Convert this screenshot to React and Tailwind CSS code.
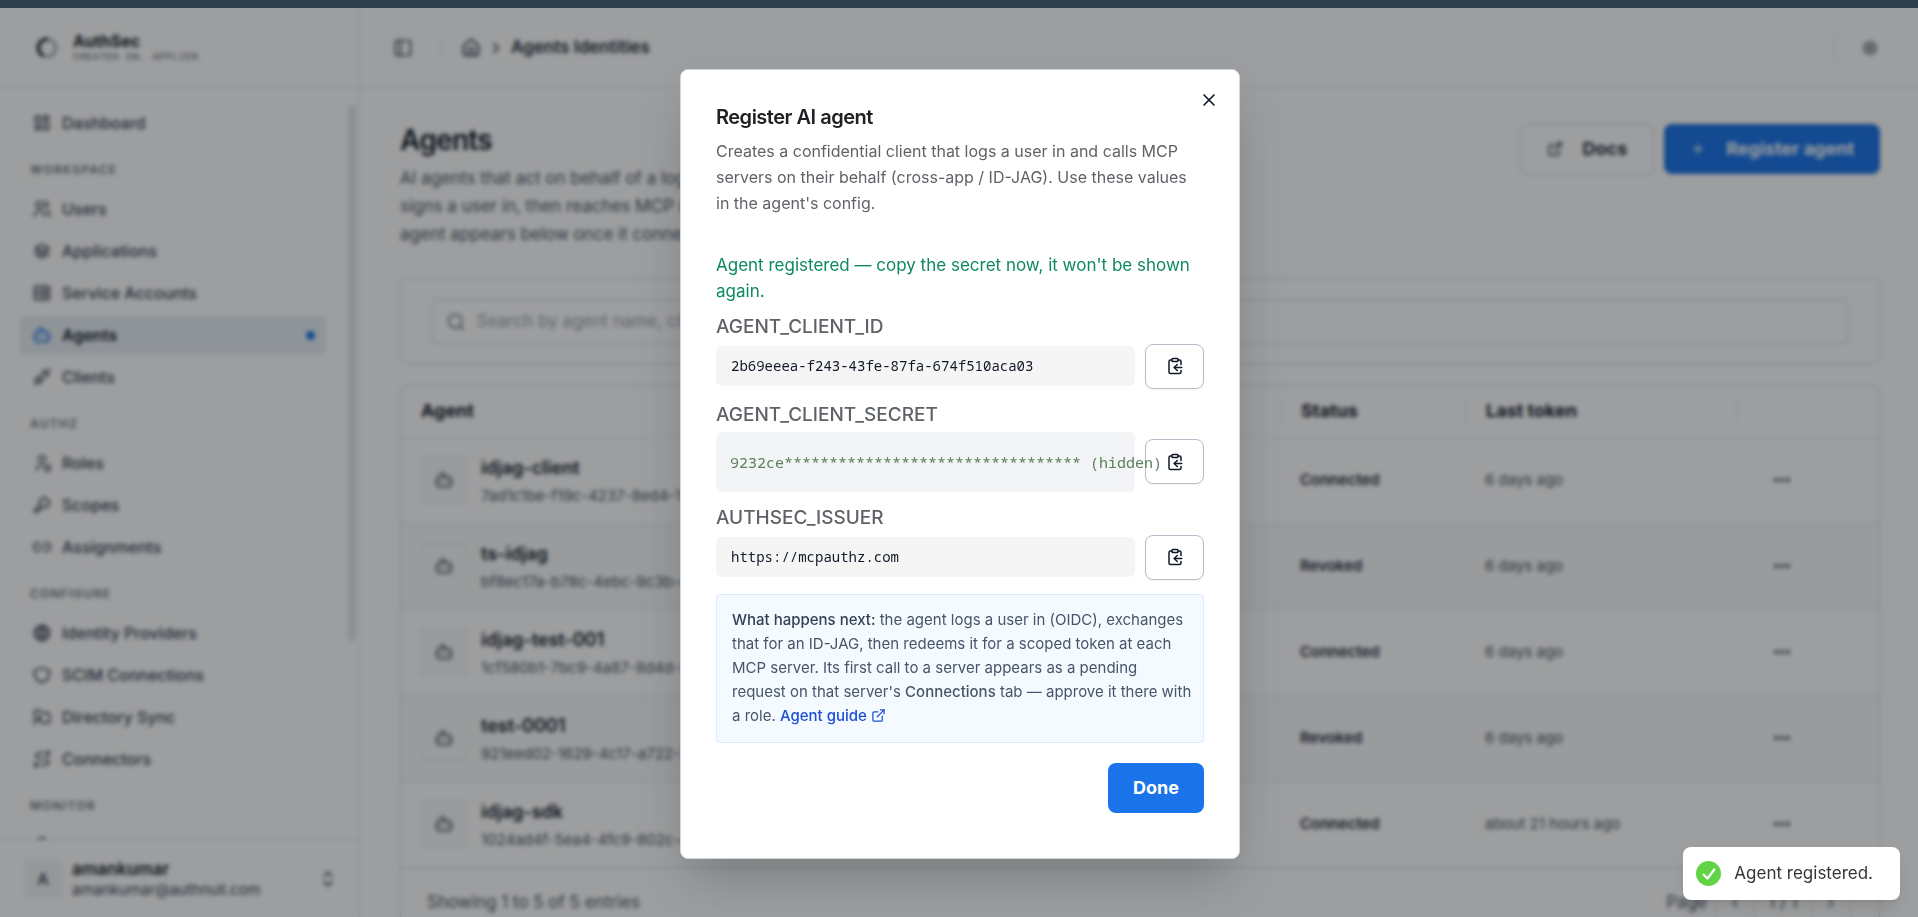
import {
  Bot,
  ChevronLeft,
  ChevronRight,
  ChevronsUpDown,
  ClipboardCopy,
  Ellipsis,
  ExternalLink,
  House,
  Link2,
  PanelLeft,
  Plus,
  Search,
  Settings,
  X,
} from 'lucide-react';
import {
  TbCloudComputing,
  TbFolderSymlink,
  TbKey,
  TbLayoutDashboard,
  TbPlugConnected,
  TbRoute,
  TbServer2,
  TbShield,
  TbStack2,
  TbUserShield,
  TbUsers,
  TbWorld,
} from 'react-icons/tb';

const navGroups = [
  { label: null, items: [{ name: 'Dashboard', icon: TbLayoutDashboard }] },
  {
    label: 'Workspace',
    items: [
      { name: 'Users', icon: TbUsers },
      { name: 'Applications', icon: TbStack2 },
      { name: 'Service Accounts', icon: TbServer2 },
      { name: 'Agents', icon: Bot, active: true },
      { name: 'Clients', icon: TbPlugConnected },
    ],
  },
  {
    label: 'Authz',
    items: [
      { name: 'Roles', icon: TbUserShield },
      { name: 'Scopes', icon: TbKey },
      { name: 'Assignments', icon: Link2 },
    ],
  },
  {
    label: 'Configure',
    items: [
      { name: 'Identity Providers', icon: TbWorld },
      { name: 'SCIM Connections', icon: TbShield },
      { name: 'Directory Sync', icon: TbFolderSymlink },
      { name: 'Connectors', icon: TbRoute },
    ],
  },
  { label: 'Monitor', items: [{ name: 'Logs', icon: TbCloudComputing, iconOnly: true }] },
];

const agents = [
  { name: 'idjag-client', id: '7ad1c1be-f19c-4237-8ed4-1', status: 'Connected', lastToken: '6 days ago' },
  { name: 'ts-idjag', id: 'bf8ec17a-b78c-4ebc-9c3b-4', status: 'Revoked', lastToken: '6 days ago' },
  { name: 'idjag-test-001', id: '1cf580b1-7bc9-4a87-8d4d-5', status: 'Connected', lastToken: '6 days ago' },
  { name: 'test-0001', id: '921eed02-1629-4c17-a722-7', status: 'Revoked', lastToken: '6 days ago' },
  { name: 'idjag-sdk', id: '1024ad4f-5ea4-4fc9-802c-e', status: 'Connected', lastToken: 'about 21 hours ago' },
];

const Sidebar = () => (
  <aside className="flex w-[360px] shrink-0 flex-col border-r border-gray-200">
    <div className="flex h-20 shrink-0 items-center gap-[15px] border-b border-gray-200 pl-9">
      <svg viewBox="0 0 24 24" className="size-[22px]" fill="none" aria-hidden="true">
        <circle cx="12" cy="12" r="9.500" stroke="#9ca3af" strokeWidth="3" />
        <path d="M8 20.500A9.500 9.500 0 0 1 13 2.500" stroke="#1f2937" strokeWidth="4" />
      </svg>
      <div className="flex flex-col">
        <span className="text-base leading-[18px] font-bold text-gray-900">AuthSec</span>
        <span className="font-['Liberation_Mono',monospace] text-[11px] leading-[14px] text-gray-500 uppercase">
          Created on. Applier
        </span>
      </div>
    </div>

    <div className="flex min-h-0 flex-1">
      <nav className="min-h-0 flex-1 overflow-hidden pt-4 pr-[22px] pl-5">
        {navGroups.map((group) => (
          <div key={group.label || 'top'}>
            {group.label && (
              <h2 className="mt-5 mb-3 pl-[10px] text-xs leading-4 font-semibold tracking-widest text-gray-500 uppercase">
                {group.label}
              </h2>
            )}
            <ul className="flex flex-col gap-1">
              {group.items.map(({ name, icon: Icon, active, iconOnly }) => (
                <li key={name}>
                  <a
                    href="#"
                    aria-label={name}
                    className={`flex h-[38px] items-center gap-[10px] pr-[11px] pl-3 text-base ${
                      active ? 'rounded bg-[#e8eff4] font-semibold text-gray-900' : 'font-medium text-gray-700'
                    }`}
                  >
                    <Icon className={`size-5 ${active ? 'text-[#1a73e8]' : 'text-gray-700'}`} />
                    {!iconOnly && <span>{name}</span>}
                    {active && <span className="ml-auto size-[9px] rounded-full bg-[#1a73e8]" />}
                  </a>
                </li>
              ))}
            </ul>
          </div>
        ))}
      </nav>
      <div className="flex w-[11px] shrink-0 flex-col pt-4 pr-[3px]">
        <div className="h-[537px] rounded bg-[#e3e9ef]" />
      </div>
    </div>

    <div className="flex h-[78px] shrink-0 items-center gap-[10px] border-t border-gray-200 pr-[21px] pl-6">
      <div className="flex size-[38px] items-center justify-center rounded bg-gray-100 text-base font-medium text-gray-700">
        A
      </div>
      <div className="flex flex-1 flex-col">
        <span className="text-[17px] leading-[22px] font-semibold text-gray-900">amankumar</span>
        <span className="text-[15px] leading-5 text-gray-700">amankumar@authnull.com</span>
      </div>
      <ChevronsUpDown className="size-5 text-gray-700" />
    </div>
  </aside>
);

const TopBar = () => (
  <header className="flex h-20 shrink-0 items-center border-b border-gray-200 pr-10 pl-[33px]">
    <button type="button" aria-label="Toggle sidebar">
      <PanelLeft className="size-5 text-gray-700" />
    </button>
    <div className="mr-5 ml-[27px] h-5 w-px bg-gray-200" />
    <nav className="flex items-center gap-[6px] text-[17px] font-semibold text-gray-800">
      <House className="size-5" />
      <ChevronRight className="size-[18px]" />
      <span>Agents Identities</span>
    </nav>
    <div className="mr-[27px] ml-auto h-7 w-px bg-gray-200" />
    <button type="button" aria-label="Settings">
      <Settings className="size-4 text-gray-700" />
    </button>
  </header>
);

const AgentsTable = () => (
  <section className="mt-5 rounded-lg border border-[#d1d5db]">
    <table className="w-full table-fixed border-collapse text-left">
      <thead>
        <tr className="h-[51px] border-b border-gray-200 text-lg font-semibold text-gray-900">
          <th className="px-5">Agent</th>
          <th className="w-[185px]">
            <div className="border-l border-gray-200 pl-5 leading-5">Status</div>
          </th>
          <th className="w-[271px]">
            <div className="border-l border-gray-200 pl-5 leading-5">Last token</div>
          </th>
          <th className="w-[143px]">
            <div className="h-5 border-l border-gray-200" />
          </th>
        </tr>
      </thead>
      <tbody>
        {agents.map((agent) => (
          <tr key={agent.id} className="h-[86px] border-b border-gray-200 last:border-gray-300 even:bg-gray-50">
            <td className="px-5">
              <div className="flex items-center gap-[14px]">
                <div className="flex size-[46px] items-center justify-center rounded border border-gray-200 bg-gray-50">
                  <Bot className="size-5 text-gray-600" />
                </div>
                <div className="flex flex-col gap-1 pt-1">
                  <span className="text-lg leading-6 font-semibold text-gray-900">{agent.name}</span>
                  <span className="text-[15px] leading-6 text-gray-600">{agent.id}</span>
                </div>
              </div>
            </td>
            <td className="pl-5 text-[15px] font-semibold text-gray-800">{agent.status}</td>
            <td className="pl-5 text-[15px] text-gray-600">{agent.lastToken}</td>
            <td className="pl-9">
              <button type="button" aria-label={`Actions for ${agent.name}`} className="block">
                <Ellipsis className="size-5 text-gray-700" strokeWidth={3} />
              </button>
            </td>
          </tr>
        ))}
      </tbody>
    </table>
    <div className="flex h-[70px] items-center justify-between pr-7 pl-[26px] text-[17px] text-gray-600">
      <span>Showing 1 to 5 of 5 entries</span>
      <div className="flex items-center">
        <span className="mr-2">Page</span>
        <button type="button" aria-label="Previous page" className="flex h-9 w-10 items-center justify-center border border-gray-200">
          <ChevronLeft className="size-4" />
        </button>
        <span className="flex h-9 w-14 items-center justify-center border-y border-gray-200">1 / 1</span>
        <button type="button" aria-label="Next page" className="flex h-9 w-10 items-center justify-center border border-gray-200">
          <ChevronRight className="size-4" />
        </button>
      </div>
    </div>
  </section>
);

const AgentsPage = () => (
  <main className="pt-[34px] pr-[38px] pl-10">
    <div className="flex items-start justify-between">
      <div>
        <h1 className="text-[28px] leading-9 font-semibold tracking-tight text-gray-900">Agents</h1>
        <p className="mt-[6px] text-[17px] leading-7 text-gray-600">
          AI agents that act on behalf of a logged-in user. Each agent
          <br />
          signs a user in, then reaches MCP servers on their behalf. An
          <br />
          agent appears below once it connects.
        </p>
      </div>
      <div className="flex items-center gap-[10px] pt-px">
        <a
          href="#"
          className="flex h-[52px] items-center gap-5 rounded-lg border border-gray-300 px-[26px] text-lg font-bold text-gray-800"
        >
          <ExternalLink className="size-4" />
          Docs
        </a>
        <button
          type="button"
          className="flex h-[50px] items-center gap-5 rounded-lg bg-[#1a73e8] px-[26px] text-lg font-bold text-white"
        >
          <Plus className="size-4" />
          Register agent
        </button>
      </div>
    </div>

    <section className="mt-[30px] rounded-lg border border-[#d1d5db] px-[30px] py-5">
      <div className="flex h-[45px] items-center gap-[11px] rounded-lg border border-[#d1d5db] px-[14px]">
        <Search className="size-5 text-gray-500" />
        <input
          type="text"
          aria-label="Search agents"
          placeholder="Search by agent name, client ID or status"
          className="flex-1 bg-transparent text-[17px] text-gray-800 outline-none placeholder:text-gray-400"
        />
      </div>
    </section>

    <AgentsTable />
  </main>
);

const CopyField = ({ label, children }) => (
  <div className="flex flex-col gap-[3px]">
    <div className="text-[19px] leading-7 font-medium text-[#5f6368]">{label}</div>
    <div className="flex items-center gap-[10px]">
      {children}
      <button
        type="button"
        aria-label={`Copy ${label}`}
        className="flex h-[45px] w-[59px] shrink-0 items-center justify-center rounded-lg border border-[#b8bec9] bg-white text-gray-900 shadow-xs"
      >
        <ClipboardCopy className="size-[18px]" />
      </button>
    </div>
  </div>
);

const RegisterDialog = () => (
  <div
    role="dialog"
    aria-modal="true"
    aria-labelledby="dialog-title"
    className="relative w-[560px] rounded-lg border border-gray-300 bg-white px-[35px] pt-[33px] pb-[45px] shadow-2xl"
  >
    <button type="button" aria-label="Close" className="absolute top-5 right-5 text-gray-900">
      <X className="size-5" strokeWidth={2} />
    </button>

    <h2 id="dialog-title" className="text-xl leading-7 font-semibold tracking-tight text-[#202124]">
      Register AI agent
    </h2>
    <p className="mt-[7px] pr-2 text-base leading-[26px] text-[#5f6368]">
      Creates a confidential client that logs a user in and calls MCP servers on their behalf (cross-app / ID-JAG). Use
      these values in the agent&apos;s config.
    </p>

    <p className="mt-9 text-[17px] leading-[26px] text-[#0d8a5b]">
      Agent registered — copy the secret now, it won&apos;t be shown again.
    </p>

    <div className="mt-[9px] flex flex-col gap-3">
      <CopyField label="AGENT_CLIENT_ID">
        <code className="min-w-0 flex-1 rounded-md bg-[#f5f5f5] px-[15px] py-[10px] font-['Noto_Sans_Mono','Liberation_Mono',monospace] text-sm leading-5 text-gray-900">
          2b69eeea-f243-43fe-87fa-674f510aca03
        </code>
      </CopyField>
      <CopyField label="AGENT_CLIENT_SECRET">
        <code className="min-w-0 flex-1 rounded-md bg-[#f3f4f6] px-[14px] py-5 font-['Noto_Sans_Mono','Liberation_Mono',monospace] text-[15px] leading-5 whitespace-nowrap text-[#5b7f5b]">
          <span className="relative z-10">9232ce********************************* (hidden)</span>
        </code>
      </CopyField>
      <CopyField label="AUTHSEC_ISSUER">
        <code className="min-w-0 flex-1 rounded-md bg-[#f5f5f5] px-[15px] py-[10px] font-['Noto_Sans_Mono','Liberation_Mono',monospace] text-sm leading-5 text-gray-900">
          https://mcpauthz.com
        </code>
      </CopyField>
    </div>

    <div className="mt-[14px] rounded border border-[#dbeafe] bg-[#f5faff] pt-[13px] pr-[10px] pb-[14px] pl-[15px] text-[15px] leading-6 text-[#475569]">
      <strong className="font-medium text-[#334155]">What happens next:</strong> the agent logs a user in (OIDC),
      exchanges that for an ID-JAG, then redeems it for a scoped token at each MCP server. Its first call to a server
      appears as a pending request on that server&apos;s <strong className="font-medium">Connections</strong> tab —
      approve it there with a role.{' '}
      <a href="#" className="inline-flex items-center gap-1 font-medium text-[#1d4ed8]">
        Agent guide
        <ExternalLink className="size-[15px]" />
      </a>
    </div>

    <div className="mt-5 flex justify-end">
      <button type="button" className="h-[50px] rounded-lg bg-[#1a73e8] px-[25px] text-lg font-bold text-white">
        Done
      </button>
    </div>
  </div>
);

const Toast = () => (
  <div
    role="status"
    className="fixed right-[18px] bottom-[17px] flex h-[53px] items-center gap-[13px] rounded-lg bg-white pr-[27px] pl-[13px] text-[17px] text-[#363636] shadow-lg"
  >
    <span className="flex size-[25px] items-center justify-center rounded-full bg-[#61d345]">
      <svg viewBox="0 0 24 24" className="size-[18px]" fill="none" stroke="#fff" strokeWidth="3" strokeLinecap="round" strokeLinejoin="round">
        <path d="m5 13 5 5L19 6" />
      </svg>
    </span>
    Agent registered.
  </div>
);

export default function App() {
  return (
    <div className="h-screen overflow-hidden bg-white pt-2 font-[Inter,sans-serif] text-gray-900">
      <div className="flex h-full">
        <Sidebar />
        <div className="min-w-0 flex-1 overflow-hidden">
          <TopBar />
          <AgentsPage />
        </div>
      </div>

      <div className="fixed inset-0 flex items-center justify-center bg-[#0b0d10]/40 pt-[10px] pl-[2px] backdrop-blur-[2px]">
        <RegisterDialog />
      </div>
      <div className="fixed inset-x-0 top-0 h-2 bg-[#2e3f4b]" />
      <Toast />
    </div>
  );
}
